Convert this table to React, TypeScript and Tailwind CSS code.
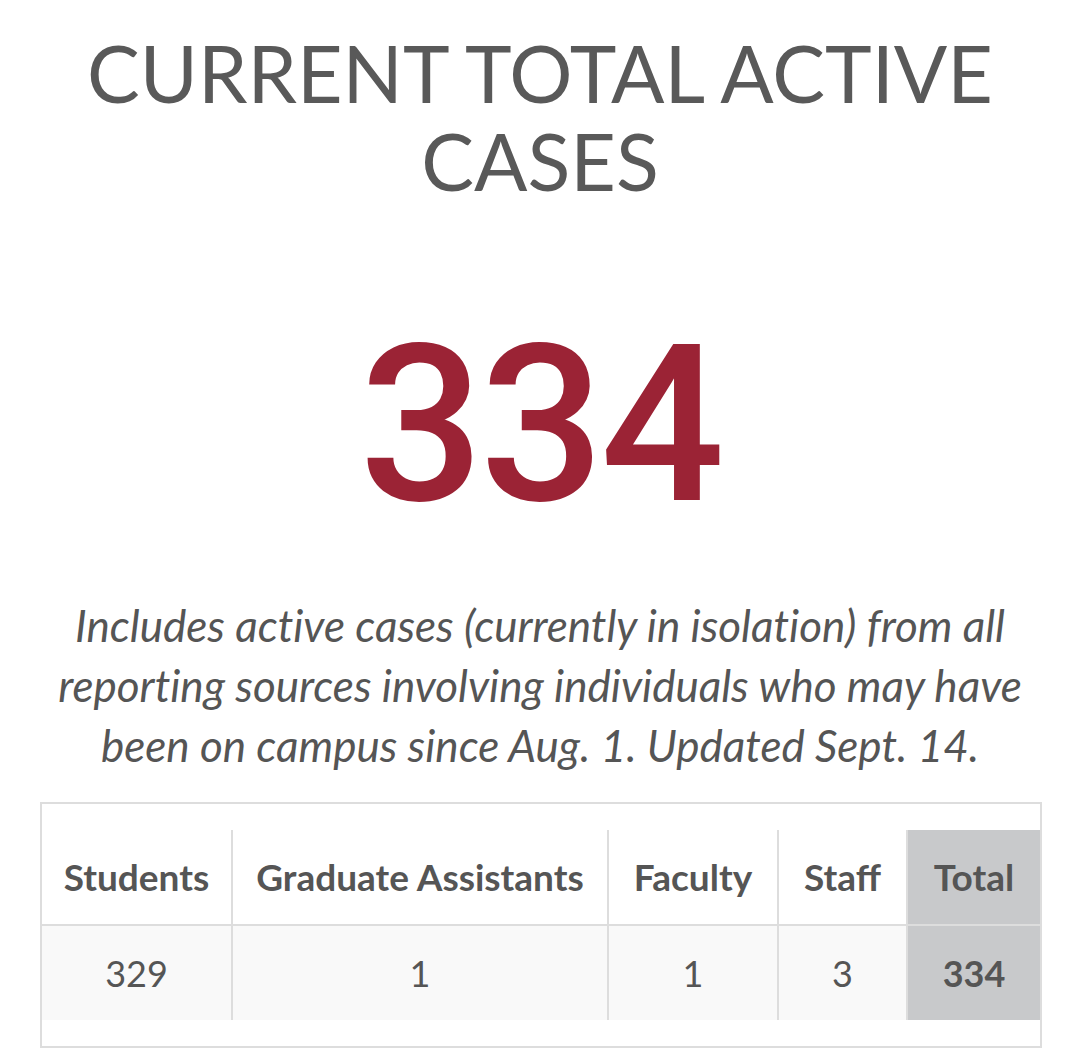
export default function App() {
  const heads = [
    { label: "Students", value: "329", w: "w-[190px]" },
    { label: "Graduate Assistants", value: "1", w: "w-[376px]" },
    { label: "Faculty", value: "1", w: "w-[170px]" },
    { label: "Staff", value: "3", w: "w-[129px]" },
  ];

  return (
    <div className="min-h-screen bg-white px-[40px] pt-[29px] text-center" style={{ fontFamily: "Lato, sans-serif" }}>
      <h1 className="mx-auto max-w-[960px] text-[79px] leading-[88px] font-normal text-[#595959]">
        CURRENT TOTAL ACTIVE CASES
      </h1>

      <div
        className="mt-[111px] text-[219px] leading-none font-medium tracking-[-4px] text-[#9b2335]"
        style={{ fontFamily: "Roboto, 'Liberation Sans', Arial, sans-serif" }}
      >
        334
      </div>

      <p className="mx-auto mt-[60px] max-w-[1000px] text-[44px] leading-[60px] italic text-[#555] [font-variant-ligatures:none]">
        Includes active cases (currently in isolation) from all reporting sources involving individuals who may have
        been on campus since Aug. 1. Updated Sept. 14.
      </p>

      <div className="mt-[27px] w-[1002px] border-2 border-[#ddd] pt-[26px] pb-[26px]">
        <table className="w-full border-collapse text-[#555]">
          <thead>
            <tr className="h-[95px] border-b-2 border-[#ddd]">
              {heads.map((h) => (
                <th key={h.label} className={`${h.w} border-r-2 border-[#ddd] text-[37px] font-bold`}>
                  {h.label}
                </th>
              ))}
              <th className="bg-[#c8c9cb] text-[37px] font-bold">Total</th>
            </tr>
          </thead>
          <tbody>
            <tr className="h-[95px] bg-[#f9f9f9]">
              {heads.map((h) => (
                <td key={h.label} className="border-r-2 border-[#ddd] text-[36px]">
                  {h.value}
                </td>
              ))}
              <td className="bg-[#c8c9cb] text-[36px] font-bold">334</td>
            </tr>
          </tbody>
        </table>
      </div>
    </div>
  );
}
